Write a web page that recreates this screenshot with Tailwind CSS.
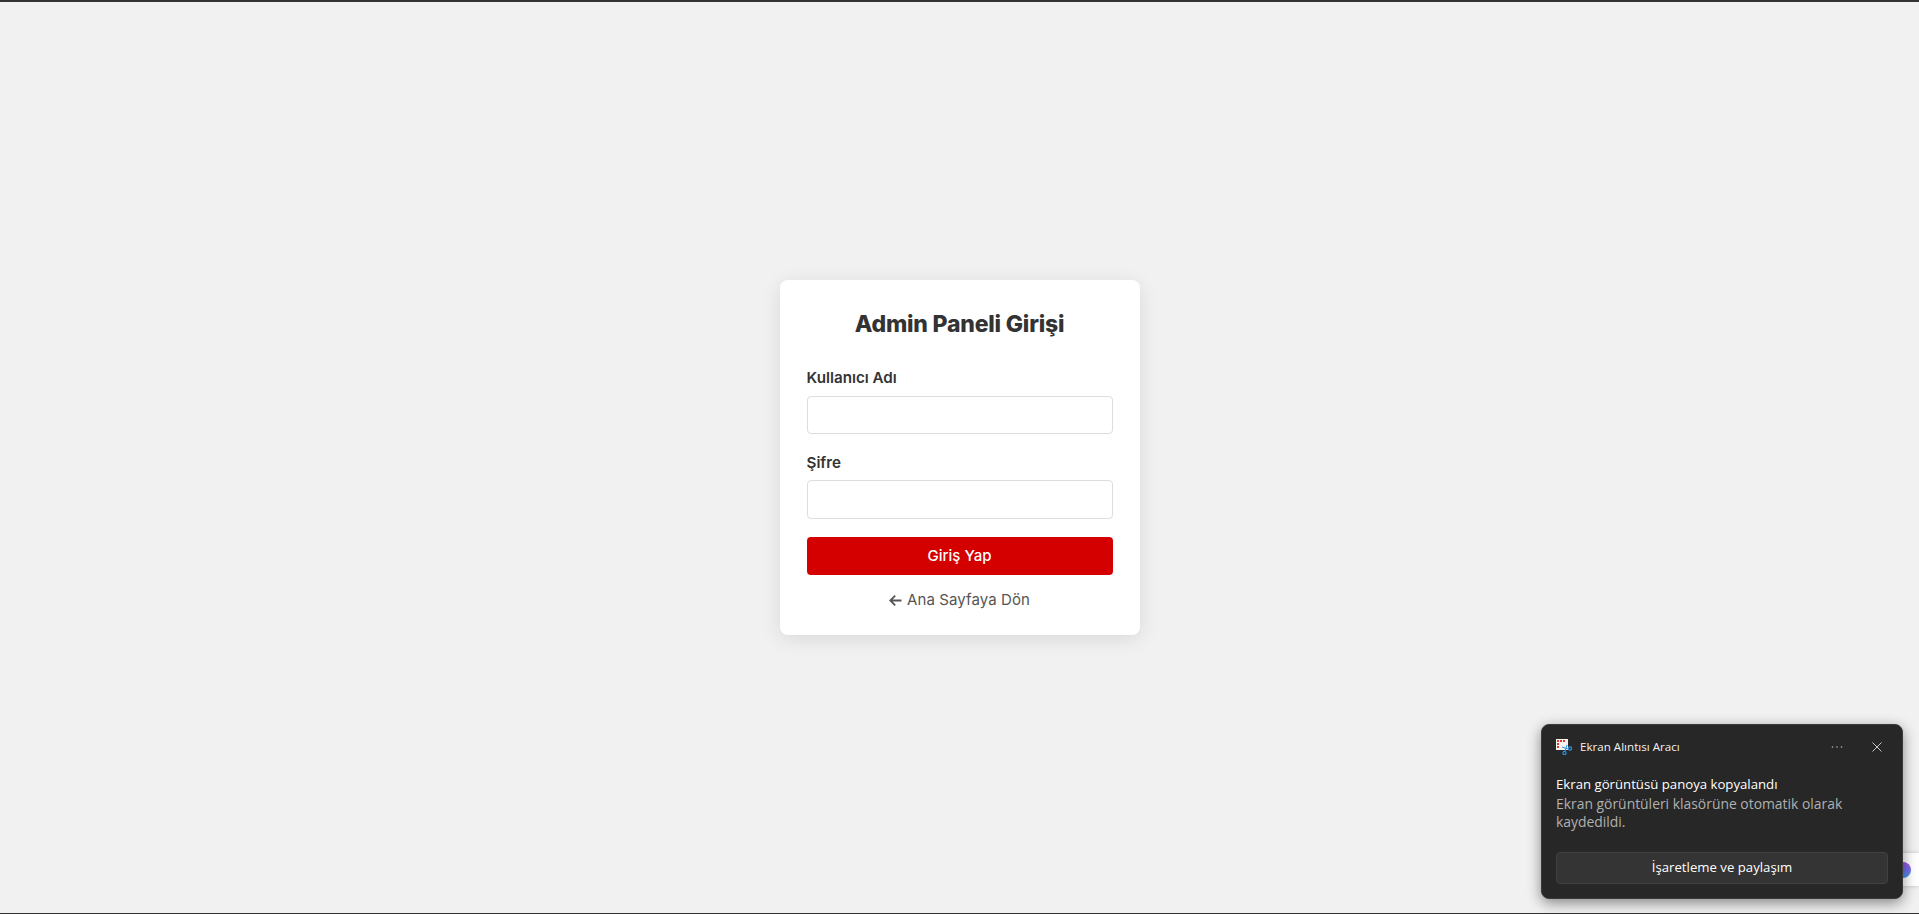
<!DOCTYPE html>
<html lang="tr">

<head>
  <meta charset="UTF-8" />
  <meta name="viewport" content="width=device-width, initial-scale=1.0" />
  <title>Admin Paneli Girişi</title>
  <script src="https://cdn.jsdelivr.net/npm/@tailwindcss/browser@4"></script>
</head>

<body class="bg-[#f1f1f1] h-[914px] overflow-hidden relative flex flex-col font-['Inter',sans-serif]">

  <!-- Top and bottom window edges -->
  <div class="h-[2px] bg-[#333333] shrink-0"></div>

  <main class="flex-1 flex items-center justify-center">
    <!-- Login card -->
    <form class="w-[360px] h-[355px] bg-white rounded-lg p-[27px] shadow-[0_4px_20px_rgba(0,0,0,0.1)]">
      <h2 class="h-8 mb-[27px] text-[23px] leading-[34px] font-extrabold text-[#333333] text-center tracking-[-0.2px]">Admin Paneli Girişi</h2>

      <div class="mb-[16px]">
        <label for="username" class="block h-[22px] mb-2 text-[15.2px] leading-[24px] font-semibold text-[#333333]">Kullanıcı Adı</label>
        <input type="text" id="username" class="block w-full h-[38px] bg-white border border-[#dddddd] rounded">
      </div>

      <div class="mb-[18px]">
        <label for="password" class="block h-[22px] mb-2 text-[15.2px] leading-[25px] font-semibold text-[#333333]">Şifre</label>
        <input type="password" id="password" class="block w-full h-[39px] bg-white border border-[#dddddd] rounded">
      </div>

      <button type="button" class="block w-full h-[38px] bg-[#d40000] text-white text-[15px] font-medium rounded">Giriş Yap</button>

      <a href="#" class="mt-[14px] h-[22px] flex items-center justify-center gap-[5px] text-[15px] leading-[22px] tracking-[0.1px] text-[#555555]">
        <svg class="w-[13px] h-[13px]" viewBox="0 0 13 13" fill="none" stroke="#555555" stroke-width="1.8">
          <path d="M12.5 6.5H1.5M6.2 1.6 1.3 6.5l4.9 4.9"></path>
        </svg>
        Ana Sayfaya Dön
      </a>
    </form>
  </main>

  <div class="h-px bg-[#333333] shrink-0"></div>

  <!-- reCAPTCHA badge peeking out behind the toast -->
  <div class="absolute right-0 top-[853px] w-[40px] h-[33px] bg-white shadow-[0_0_4px_rgba(0,0,0,0.2)] flex items-center justify-end pr-[8px]">
    <div class="w-[16px] h-[16px] rounded-full bg-gradient-to-b from-[#a055e0] via-[#6f6ce8] to-[#3a9bf0]"></div>
  </div>

  <!-- Windows notification -->
  <div class="absolute left-[1541px] top-[724px] w-[362px] h-[175px] bg-[#272727] border border-[#3a3a3a] rounded-lg shadow-[0_4px_14px_rgba(0,0,0,0.45)] px-[14px] font-['Open_Sans',sans-serif]">
    <div class="h-[44px] flex items-center">
      <svg class="w-4 h-4 shrink-0" viewBox="0 0 16 16">
        <rect x="0" y="0" width="12" height="11" fill="#f2f2f2"></rect>
        <rect x="1" y="1" width="2" height="2" fill="#d83b2d"></rect>
        <rect x="4" y="1" width="2" height="2" fill="#d83b2d"></rect>
        <rect x="7" y="1" width="2" height="2" fill="#d83b2d"></rect>
        <rect x="1" y="4" width="2" height="2" fill="#d83b2d"></rect>
        <rect x="1" y="7" width="2" height="2" fill="#d83b2d"></rect>
        <circle cx="14" cy="9.5" r="1.6" fill="none" stroke="#2a93e0" stroke-width="1.2"></circle>
        <circle cx="8.5" cy="14" r="1.6" fill="none" stroke="#2a93e0" stroke-width="1.2"></circle>
        <path d="M6 8l6 2M11 6l-2 6" stroke="#2a93e0" stroke-width="1" fill="none"></path>
      </svg>
      <span class="ml-2 text-[11.6px] text-[#f2f2f2]">Ekran Alıntısı Aracı</span>
      <svg class="ml-auto w-[12px] h-[4px]" viewBox="0 0 12 4" fill="#b5b5b5">
        <circle cx="1.5" cy="2" r="0.8"></circle>
        <circle cx="6" cy="2" r="0.8"></circle>
        <circle cx="10.5" cy="2" r="0.8"></circle>
      </svg>
      <svg class="ml-[29px] mr-[6px] w-[10px] h-[10px]" viewBox="0 0 10 10" stroke="#c8c8c8" stroke-width="1" fill="none">
        <path d="M0.5 0.5l9 9M9.5 0.5l-9 9"></path>
      </svg>
    </div>
    <p class="mt-[5px] text-[13.2px] leading-[20px] text-white">Ekran görüntüsü panoya kopyalandı</p>
    <p class="mt-px text-[13.9px] leading-[18px] text-[#b0b0b0]">Ekran görüntüleri klasörüne otomatik olarak kaydedildi.</p>
    <button type="button" class="mt-[21px] block w-full h-[32px] bg-[#343434] border border-[#414141] rounded text-[13.2px] text-white">İşaretleme ve paylaşım</button>
  </div>

</body>

</html>
